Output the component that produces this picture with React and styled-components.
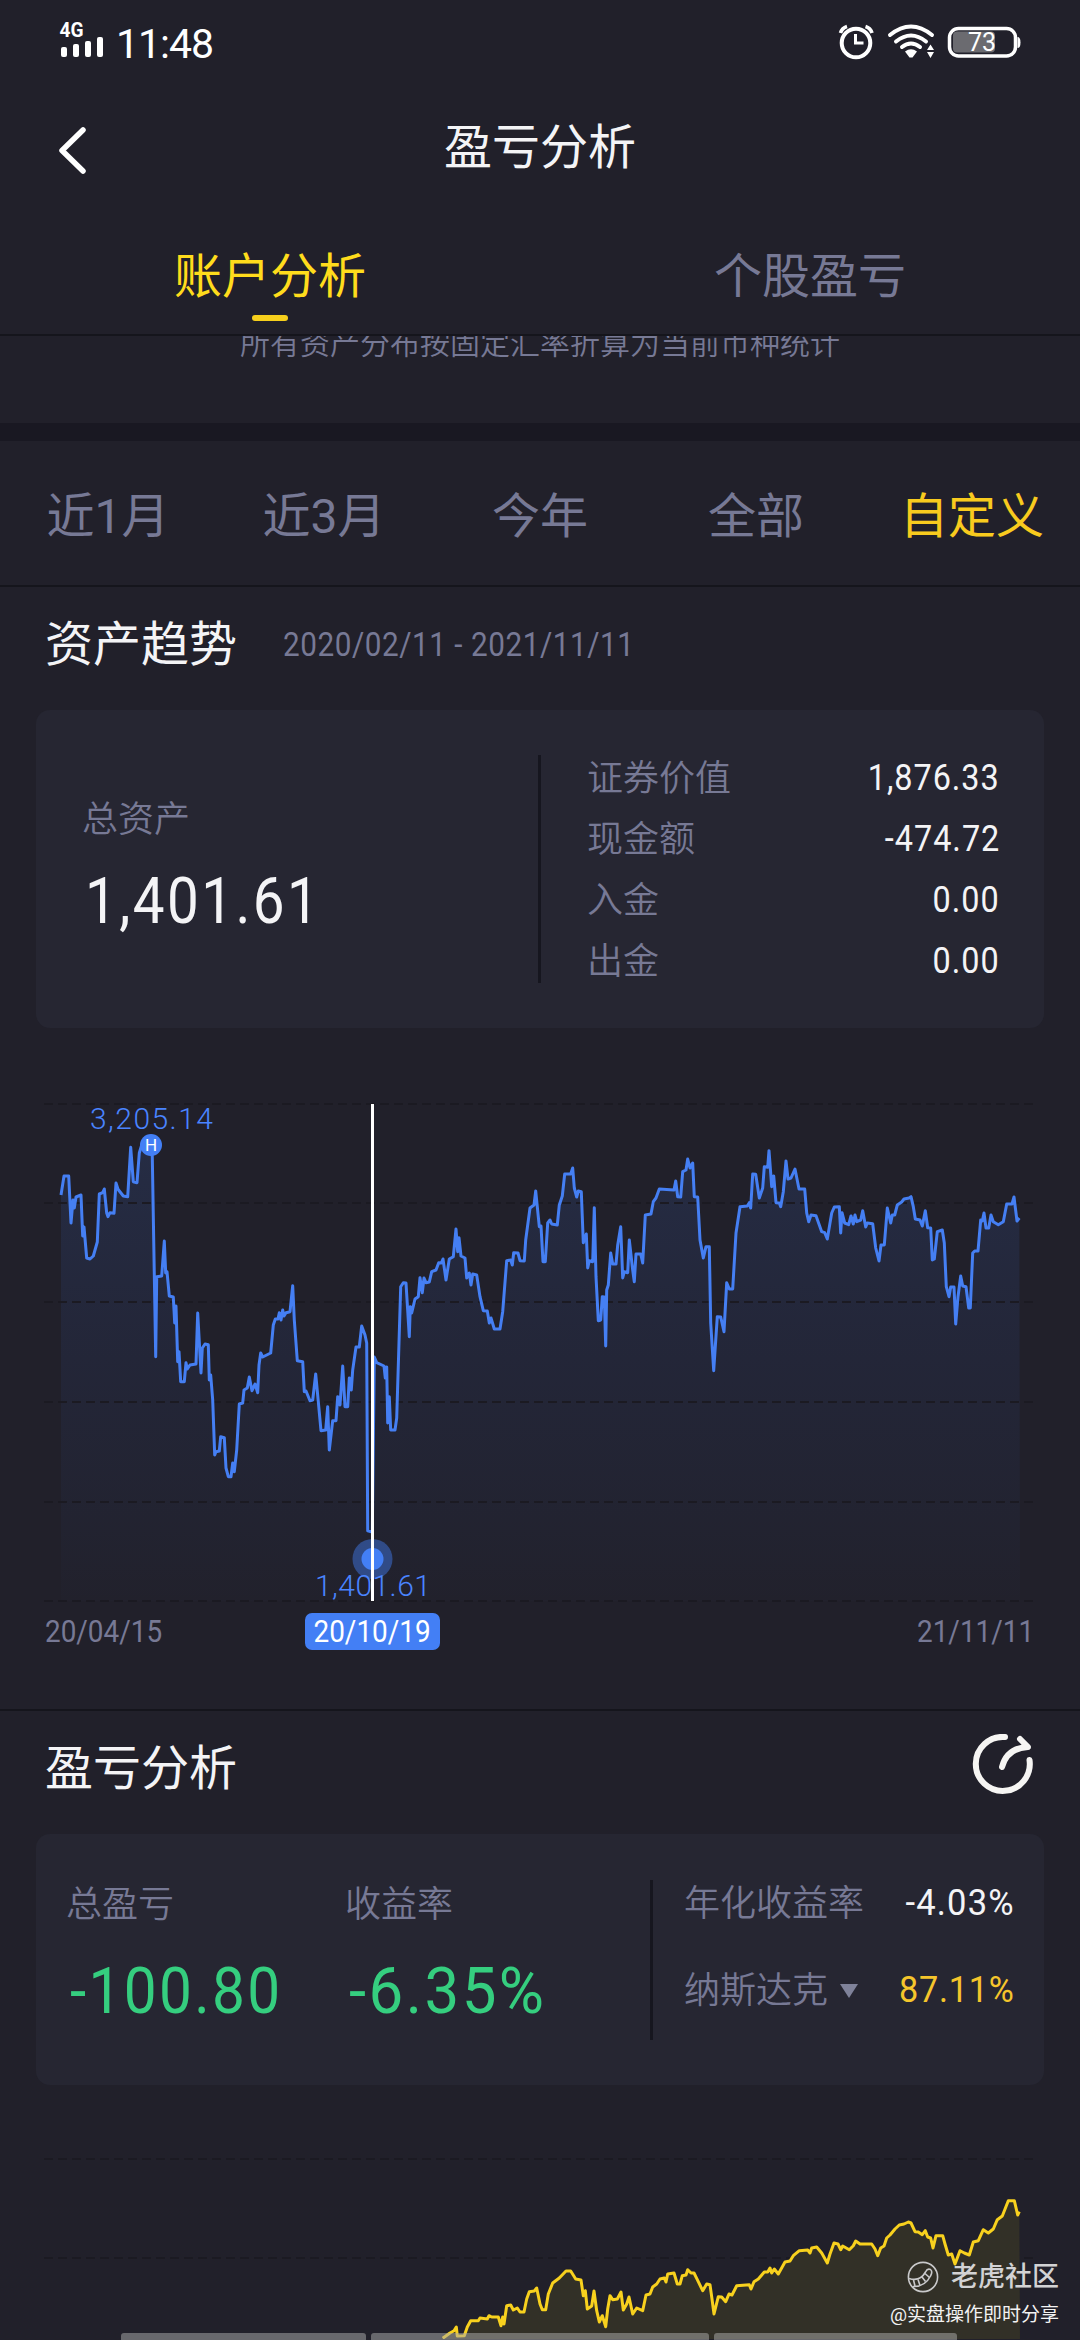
import React, { useState } from "react";
import styled, { createGlobalStyle } from "styled-components";

const GlobalStyle = createGlobalStyle`
  * {
    box-sizing: border-box;
  }

  body {
    margin: 0;
    background: #21202a;
    font-family: Roboto, "Noto Sans CJK SC", sans-serif;
    font-weight: 400;
  }
`;

const Screen = styled.div`
  position: relative;
  width: 1080px;
  height: 2340px;
  overflow: hidden;
  color: #f4f4f6;
`;

const StatusBar = styled.div`
  display: flex;
  justify-content: space-between;
  height: 90px;
  padding: 0 59px;
`;

const StatusGroup = styled.div`
  display: flex;
`;

const Clock = styled.span`
  margin-left: 11px;
  font-size: 41px;
  line-height: 89px;
  letter-spacing: -1px;
  color: #fff;
`;

const NavBar = styled.div`
  display: grid;
  grid-template-columns: 146px 1fr 146px;
  align-items: center;
  height: 116px;
  padding-left: 58px;
  margin-right: 58px;
`;

const NavTitle = styled.h1`
  margin: 0;
  font-size: 48px;
  line-height: 60px;
  font-weight: 400;
  text-align: center;
`;

const Tabs = styled.div`
  display: grid;
  grid-template-columns: 1fr 1fr;
  height: 130px;
  border-bottom: 2px solid #15151c;
`;

const Tab = styled.button`
  display: flex;
  flex-direction: column;
  align-items: center;
  padding: 36px 0 0;
  border: 0;
  background: none;
  font-family: inherit;
  font-size: 48px;
  line-height: 70px;
  color: ${({ $active }) => ($active ? "#ffdc1c" : "#777995")};

  &::after {
    content: "";
    width: 36px;
    height: 6px;
    margin-top: 3px;
    border-radius: 3px;
    background: ${({ $active }) => ($active ? "#f6cf1c" : "transparent")};
  }
`;

const Notice = styled.div`
  height: 87px;
  overflow: hidden;
  font-size: 30px;
  font-weight: 350;
  color: #777995;
  text-align: center;

  p {
    margin: -14px 0 0;
    line-height: 44px;
  }
`;

const Band = styled.div`
  height: 18px;
  background: #191822;
`;

const Periods = styled.div`
  display: grid;
  grid-template-columns: repeat(5, 1fr);
  height: 146px;
  border-bottom: 2px solid #15151c;
`;

const Period = styled.button`
  padding: 0 0 3px;
  border: 0;
  background: none;
  font-family: inherit;
  font-size: 48px;
  white-space: nowrap;
  color: ${({ $active }) => ($active ? "#f8cb1e" : "#777995")};
`;

const SectionHead = styled.div`
  display: flex;
  align-items: center;
  height: ${({ $height }) => $height}px;
  padding: 0 45px 8px 45px;
`;

const SectionTitle = styled.h2`
  margin: 0;
  flex: 1;
  font-size: 48px;
  font-weight: 400;
  line-height: 64px;
`;

const DateRange = styled.div`
  width: 798px;
  padding-left: 46px;
  color: #777995;
`;

// Narrow figures: the text keeps its size and is squeezed sideways
const Figure = styled.span`
  display: inline-block;
  font-size: ${({ $size }) => $size || 36}px;
  line-height: 1.2;
  font-weight: 400;
  letter-spacing: ${({ $track }) => $track || 0}px;
  color: ${({ $color }) => $color || "inherit"};
  white-space: nowrap;
  transform: scaleX(${({ $scale }) => $scale || 0.9});
  transform-origin: ${({ $from }) => $from || "left"} center;
`;

const Card = styled.div`
  display: flex;
  align-items: center;
  height: ${({ $height }) => $height}px;
  margin: 0 36px;
  border-radius: 14px;
  background: #262632;
`;

const Rule = styled.div`
  width: 3px;
  height: ${({ $height }) => $height}px;
  background: #16161f;
`;

const Label = styled.div`
  font-size: 36px;
  font-weight: 350;
  line-height: 54px;
  color: #777995;
  white-space: nowrap;
`;

const Total = styled.div`
  width: 502px;
  padding: 0 0 6px 46px;
`;

const TotalFigure = styled.div`
  margin-top: 15px;
  padding-left: 3px;
`;

const Rows = styled.div`
  flex: 1;
  padding: ${({ $pad }) => $pad};
`;

const Row = styled.div`
  display: flex;
  align-items: center;
  justify-content: space-between;
  height: ${({ $height }) => $height}px;
`;

const Metric = styled.div`
  width: ${({ $width }) => $width}px;
  height: 164px;
`;

const Metrics = styled.div`
  display: flex;
  width: 614px;
  padding-left: 30px;
`;

const MetricFigure = styled.div`
  margin-top: 20px;
  padding-left: 4px;
`;

const Picker = styled.div`
  display: flex;
  align-items: center;
  gap: 12px;
`;

const Triangle = styled.i`
  border: 9px solid transparent;
  border-top: 14px solid #7f829a;
  border-bottom: 0;
`;

const AssetPlot = styled.svg`
  display: block;
  margin: 62px 0 0 40px;
`;

const ProfitPlot = styled.svg`
  display: block;
  margin: 54px 0 0 40px;
`;

const Axis = styled.div`
  display: flex;
  align-items: center;
  height: 101px;
  padding: 0 46px 56px 45px;
  font-size: 31px;
  color: #777995;
  border-bottom: 2px solid #15151c;
`;

const AxisDay = styled.div`
  width: 260px;
  line-height: 37px;
`;

const AxisEnd = styled.div`
  flex: 1;
  text-align: right;
  line-height: 37px;
`;

const Pill = styled.div`
  width: 135px;
  height: 37px;
  border-radius: 7px;
  background: #437ff5;
  color: #fff;
  text-align: center;
  line-height: 37px;
`;

const NavHints = styled.div`
  position: absolute;
  left: 121px;
  bottom: 0;
  display: grid;
  grid-template-columns: 245px 338px 243px;
  gap: 5px;
  height: 7px;
`;

const Hint = styled.div`
  border-radius: 3px 3px 0 0;
  background: rgba(170, 170, 170, 0.52);
`;

const Watermark = styled.div`
  position: absolute;
  right: 21px;
  bottom: 11px;
  color: #d2d2d4;
  text-align: right;
`;

const WatermarkBrand = styled.div`
  display: flex;
  align-items: center;
  justify-content: flex-end;
  gap: 12px;
  height: 38px;
  font-size: 27px;
  font-weight: 500;
  line-height: 38px;
`;

const WatermarkUser = styled.div`
  margin-top: 5px;
  font-size: 19px;
  line-height: 28px;
  color: #f2f2f2;
`;

const ASSET_LINE =
  "21,105 24,86 28.7,86 31,133 33,110 34.3,118 36,107 41,105 42.7,146 44,137 46.7,168 50,169 53.3,166 57.3,152 59.3,104 62.7,102.7 64.3,99 66.7,123 68,126.7 70,122.7 74,123.3 76,93 78,99.3 83.3,106 87.7,106.7 90.7,57.3 93.3,91.7 97,92.7 99.3,63 101.7,55 111,55 112.3,67 115.7,266.7 116.7,186.7 121.7,186 124.3,151 125.7,183 127,181.7 129.3,206 133.3,207 134.7,233 136,216 137.7,271.7 139,261.7 140.7,291.7 144.3,291.7 146,272.7 147.3,279 150,275 156,274 157.7,223 161,283 162.3,258 165,254 168.3,254.7 169.3,290 170.7,285 172.7,310 174.7,365 176,361.7 179.3,361 180.7,346.7 184.3,347.7 186,378 188.3,386.7 191,386.7 192.7,373 194.3,381.7 196.7,360 199.3,314 202.7,313 204,300 207.3,298 209.3,287 212,300.7 215,294 217.7,302.7 219,275 220.7,263 222.7,267 230.7,263 233.3,235 235.3,229 238,229 239.3,222.7 241,230 242.7,220 244,226 246,222.7 250,221.7 252.7,195.7 254.3,230 257.3,270.7 262.7,271.7 264.3,301.7 266,301 270,310.7 272.7,310 275.7,284 278.3,311.7 281,340.7 285.7,340 287.7,316.7 289.3,360 292.7,330.7 296,330.7 297.7,306.7 300,315 302.7,276 305,316.7 307.7,316.7 309.3,288 311.3,300 312.7,280 316,257 319.3,257 321.7,236 325,245 326.7,253 327.7,440.7 332.3,442 334.3,267 336.7,272.7 344,276 345.3,288 346.7,277 347.7,333 349.3,306.7 350.7,340 355,340 356.7,328 360.7,196.7 363.3,192.7 366,193 369.3,246.7 370.3,216.7 371.7,223 375,209 378.3,206.7 380,187.7 382.3,202.7 384,188 386,192.7 389.3,192 391.7,181.7 396,180 398.7,172.7 401.3,173 403,169 406,190 409.3,169 413.3,166.7 416,139 417.7,161.7 419,147.7 421,166 425,168 426.7,188 429.3,183 431,195 432.7,184 436.7,185 440,206.7 443.3,220.7 447.3,221 449.3,233 451,228 454.3,239 460,239 462.7,221.7 466.7,170.7 470.7,170 472.3,175 473.7,162.7 478,163 480,170.7 484.3,171 485.7,150 490,118 494,115 495.7,101 499.3,136.7 501,136 503,171.7 505.3,171.7 507.7,133 510,130 511.7,134 517.3,135 519.3,115 522.3,106 524.7,84 530.7,84 532.7,78 534.3,98 536.7,107 538.3,101 541.3,101.7 543.3,152.7 546.3,144 547.7,178 549.3,170.7 552.7,171.7 554.3,117.7 556,186.7 558.3,230.7 560.7,230 562.3,206.7 564.3,207 565.7,256 566.7,200 568.3,195 570.7,163 572.7,174 576,174 577.7,155 580.7,136.7 582.7,188 584.3,181.7 587.7,182.7 589.3,150 592.7,180 594.3,191.7 596,164 600.7,164 602.7,173 605.3,125 611,124 613.3,111.7 616,108 619.3,99 634,100 635.7,91 637.7,106.7 640.7,107 642.7,81.7 646,80 647.7,69 650,78 652.7,73 654.3,106.7 657.7,107 660,150 663.3,168 666,156.7 669.3,156.7 670.7,233 673.7,280.7 677.3,226.7 680.7,227 684,241.7 686.7,192.7 689.3,199 692.7,199 696,143 700,116.7 707.3,116 709.3,112.7 710.7,118 712.7,84 715.7,84.3 719.3,108 722.7,98 724.3,76.7 727.7,77.3 729,60.7 731.7,96.7 733.7,86 736,112.7 739.3,113 740.7,116.7 743.3,101.7 746,71 748,89 751,88 755,79 759,99 764.7,99 766.7,123 768.7,131.7 771,125 776,125.7 779.3,135 781.7,141.7 784.7,142.7 787.3,149 791.7,123 794.3,117 799.3,116.7 800.7,143 802,122.7 804.7,133 808.7,134.7 811,126 813.3,134 815,125 816.7,131.7 820.7,130 822.7,120.7 825.7,137 827.3,133 832.7,133.7 835.7,158 839,171 841,155 844.3,155 847.3,118 850.7,133 852.3,125 854.7,125 857.3,115 861.7,112 864,109 869,108 871,106.7 873.3,116.7 875.3,129 880,130 882.3,136 885.3,120.7 887.7,137.7 890.7,138 892.3,170 894.3,169 897.3,141.7 902.3,140 904.3,153 906.3,196.7 909,206.7 910.7,197 914,197 915.7,234 918,206.7 920.7,186 922.7,196 926,196.7 928.7,218 930.3,218 932.7,163 934.7,161 938,161 940.7,130 942.3,131 944,123 946,138 948.7,138 951,125 953.3,131.7 958.3,134.7 963.3,131.7 966.7,114 972,114 974,107 977,131 979.3,128";

const PROFIT_LINE =
  "402.7,199.3 410,194 414,191.7 416.3,188 417.3,197 424.3,196.7 427.3,188 430.7,181.7 438.3,181.7 440,179 447.3,180 449,176.7 451.7,178 458.3,178 461,186.7 462.7,178 464,185 466.7,166.7 470.7,166 473.3,171 477.3,169 480,173 484,173 486.7,160 489.3,152.7 494.3,152 496.7,149 500,165 502.3,170.7 505.7,170.7 508.3,155 512.7,144 519.3,139 526,132 530.7,132 535.7,140 541,141 543.3,156.7 545.3,151.7 547.3,170 551.7,167 554,152 556.7,171.7 559.3,183 562.3,176.7 565.7,187.7 567.7,170 570,156.7 572.7,160.7 577.3,160 581,153 583.3,171 586.7,165 589,158 592.7,175 596.7,169 602.7,171.7 606,156 610,155 612.7,148 616.7,145 620,140 624.3,139 626,143 627.7,135 634,134 637.3,145 640,145 642.3,136.7 646,136 647.7,130.7 651,134 654,134 657.3,140.7 662.7,151.7 666.7,145 670,145.7 672,160 674,175 678.3,157.7 681.7,158 685.7,162.7 689,155 692,156 696.7,146.7 709.3,145.7 711,150 714,142.7 718.3,140 724.3,133 727.7,133 730,129 731.7,134 734.3,130 738.3,135 745,123 750,122 753.3,116.7 759.3,111.7 767.7,111 770,114 771.7,109 776.7,108 781.7,114 787.3,124 790,115 794,104 798,105 800.7,110.7 802.7,107 809.3,110.7 813.3,106.7 815.7,102 820,105 831.7,105 835,110 837.7,116.7 840.7,109 844,107 846.7,99 850,96 855,90 859.3,86 864,85 868.3,83 871,84 875,92.7 878.3,93 882.3,95.7 885.3,91.7 887.7,98 890.7,99 893,109 896,96.7 902.7,96.7 905,105 908.3,116 911.7,115 915,125 920,111.7 924.3,114 929.3,116 933.3,103 938.3,101.7 943.3,90.7 948.3,94 953.3,90 957.3,80.7 962.3,77 968.3,61.7 974.3,61.7 977.7,76 979.3,72.7";

const GridLines = ({ ys }) =>
  ys.map(y => (
    <line
      key={y}
      x1="4"
      x2="995"
      y1={y}
      y2={y}
      stroke="#1b1a22"
      strokeWidth="2"
      strokeDasharray="9 5"
    />
  ));

const AssetChart = () => (
  <AssetPlot width="1000" height="520" viewBox="0 0 1000 520">
    <defs>
      <linearGradient id="assetFill" x1="0" y1="0" x2="0" y2="1">
        <stop offset="0" stopColor="#437ff5" stopOpacity="0.13" />
        <stop offset="0.5" stopColor="#3a66d0" stopOpacity="0.08" />
        <stop offset="1" stopColor="#437ff5" stopOpacity="0.01" />
      </linearGradient>
    </defs>
    <polygon points={`21,511 ${ASSET_LINE} 980,511`} fill="url(#assetFill)" />
    <GridLines ys={[14, 113, 212, 312, 412, 511]} />
    <polyline
      points={ASSET_LINE}
      fill="none"
      stroke="#457ff3"
      strokeWidth="3"
      strokeLinejoin="round"
    />
    <circle cx="111" cy="55" r="11" fill="#437ff5" />
    <text x="111" y="61" fontSize="17" fill="#fff" textAnchor="middle">
      H
    </text>
    <text x="50" y="39" fontSize="30" fontWeight="300" fill="#4a84ff" textLength="123">
      3,205.14
    </text>
    <circle cx="332.5" cy="469" r="20" fill="#437ff5" fillOpacity="0.45" />
    <circle cx="332.5" cy="469" r="11" fill="#437ff5" />
    <text x="275" y="506" fontSize="30" fontWeight="300" fill="#4a84ff" textLength="116">
      1,401.61
    </text>
    <rect x="331" y="14" width="3" height="497" fill="#fff" />
  </AssetPlot>
);

const ProfitChart = () => (
  <ProfitPlot width="1000" height="200" viewBox="0 0 1000 200">
    <GridLines ys={[20, 119]} />
    <polygon points={`402,200 ${PROFIT_LINE} 980,200`} fill="#323027" />
    <polyline
      points={PROFIT_LINE}
      fill="none"
      stroke="#f8d11e"
      strokeWidth="3"
      strokeLinejoin="round"
    />
  </ProfitPlot>
);

const SignalIcon = () => (
  <svg width="46" height="90" viewBox="59 0 46 90" fill="#fff">
    <text
      x="59.5"
      y="36.5"
      fontSize="20"
      fontWeight="700"
      textLength="24"
      lengthAdjust="spacingAndGlyphs"
    >
      4G
    </text>
    <rect x="61" y="47" width="6" height="10" rx="2" />
    <rect x="73" y="44" width="6" height="13" rx="2" />
    <rect x="85" y="41" width="6" height="16" rx="2" />
    <rect x="97" y="37" width="6" height="20" rx="2" />
  </svg>
);

const StatusIcons = () => (
  <svg width="184" height="90" viewBox="837 0 184 90" fill="none" stroke="#fff">
    <circle cx="856" cy="43" r="14.3" strokeWidth="4" />
    <path d="M855.5 34v9h8" strokeWidth="3" />
    <path d="M840.5 33q1.500-5 6.500-6.500M865.500 26.500q5 1.500 6.500 6.500" strokeWidth="3.600" />
    <path
      d="M890 35q21-17 42 0M896 41.500q15-12 30 0M902 47q9-7 18 0"
      strokeWidth="4"
      strokeLinecap="round"
    />
    <path d="M905 51.500q6-4.500 12 0l-4.500 6h-3z" fill="#fff" stroke="none" />
    <path d="M927 50l3.500-5.500 3.500 5.500zM927 52l3.500 6 3.500-6z" fill="#fff" stroke="none" />
    <rect x="953" y="31.500" width="42" height="21" rx="4" fill="#6b6b70" stroke="none" />
    <rect x="949.500" y="28.500" width="66" height="27.500" rx="9" strokeWidth="3.500" />
    <path d="M1017.500 37q3 0 3 5.500t-3 5.500z" fill="#fff" stroke="none" />
    <text x="982" y="51" fontSize="25" fill="#fff" stroke="none" textAnchor="middle">
      73
    </text>
  </svg>
);

const BackIcon = () => (
  <svg width="30" height="54" viewBox="0 0 30 54">
    <path
      d="M25 9L4 29.500 25 50"
      fill="none"
      stroke="#fff"
      strokeWidth="5.500"
      strokeLinecap="round"
      strokeLinejoin="round"
    />
  </svg>
);

const ShareIcon = () => (
  <svg
    width="64"
    height="70"
    viewBox="0 5 64 70"
    fill="none"
    stroke="#f6f5f3"
    strokeWidth="6"
    strokeLinecap="round"
    strokeLinejoin="round"
  >
    <path d="M34 8A27 27 0 1 0 58.500 31" />
    <path d="M31 38Q36 19 57 18L49 10" />
  </svg>
);

const TigerIcon = () => (
  <svg width="32" height="32" viewBox="0 0 32 32" fill="none" stroke="#c9c9cb" strokeWidth="1.600">
    <circle cx="16" cy="16" r="14.600" />
    <path d="M2 17.500Q13 21 18.500 11Q20.500 7 23.500 8.500Q26 10.500 23.500 15Q18 26 6 25.500" />
    <path d="M6.500 19l1.500 6M11 18.500l2 6M15 16l3.500 4.500M18 12.500l4.500 4" />
  </svg>
);

const TABS = ["账户分析", "个股盈亏"];
const PERIODS = ["近1月", "近3月", "今年", "全部", "自定义"];
const ASSETS = [
  ["证券价值", "1,876.33"],
  ["现金额", "-474.72"],
  ["入金", "0.00"],
  ["出金", "0.00"]
];

const App = () => {
  const [tab, setTab] = useState(0);
  const [period, setPeriod] = useState(4);

  return (
    <Screen>
      <GlobalStyle />
      <StatusBar>
        <StatusGroup>
          <SignalIcon />
          <Clock>11:48</Clock>
        </StatusGroup>
        <StatusIcons />
      </StatusBar>
      <NavBar>
        <BackIcon />
        <NavTitle>盈亏分析</NavTitle>
      </NavBar>
      <Tabs>
        {TABS.map((name, i) => (
          <Tab key={name} $active={i === tab} onClick={() => setTab(i)}>
            {name}
          </Tab>
        ))}
      </Tabs>
      <Notice>
        <p>所有资产分布按固定汇率折算为当前币种统计</p>
      </Notice>
      <Band />
      <Periods>
        {PERIODS.map((name, i) => (
          <Period key={name} $active={i === period} onClick={() => setPeriod(i)}>
            {name}
          </Period>
        ))}
      </Periods>

      <SectionHead $height={123}>
        <SectionTitle>资产趋势</SectionTitle>
        <DateRange>
          <Figure $size={33} $track={0.6}>
            2020/02/11 - 2021/11/11
          </Figure>
        </DateRange>
      </SectionHead>
      <Card $height={318}>
        <Total>
          <Label>总资产</Label>
          <TotalFigure>
            <Figure $size={65} $scale={0.87} $track={2.8}>
              1,401.61
            </Figure>
          </TotalFigure>
        </Total>
        <Rule $height={228} />
        <Rows $pad="3px 44px 0 46px">
          {ASSETS.map(([name, value]) => (
            <Row key={name} $height={61}>
              <Label>{name}</Label>
              <Figure $from="right" $track={1.1}>
                {value}
              </Figure>
            </Row>
          ))}
        </Rows>
      </Card>
      <AssetChart />
      <Axis>
        <AxisDay>
          <Figure $size={31}>20/04/15</Figure>
        </AxisDay>
        <Pill>
          <Figure $size={31} $from="center">
            20/10/19
          </Figure>
        </Pill>
        <AxisEnd>
          <Figure $size={31} $from="right">
            21/11/11
          </Figure>
        </AxisEnd>
      </Axis>

      <SectionHead $height={123}>
        <SectionTitle>盈亏分析</SectionTitle>
        <ShareIcon />
      </SectionHead>
      <Card $height={251}>
        <Metrics>
          <Metric $width={279}>
            <Label>总盈亏</Label>
            <MetricFigure>
              <Figure $size={65} $track={2.6} $color="#35ce7f">
                -100.80
              </Figure>
            </MetricFigure>
          </Metric>
          <Metric $width={300}>
            <Label>收益率</Label>
            <MetricFigure>
              <Figure $size={65} $scale={0.95} $track={2.6} $color="#35ce7f">
                -6.35%
              </Figure>
            </MetricFigure>
          </Metric>
        </Metrics>
        <Rule $height={160} />
        <Rows $pad="0 29px 24px 31px">
          <Row $height={87}>
            <Label>年化收益率</Label>
            <Figure $from="right" $scale={0.96} $track={1.2}>
              -4.03%
            </Figure>
          </Row>
          <Row $height={87}>
            <Picker>
              <Label>纳斯达克</Label>
              <Triangle />
            </Picker>
            <Figure $from="right" $scale={0.95} $track={0.8} $color="#f5c52c">
              87.11%
            </Figure>
          </Row>
        </Rows>
      </Card>
      <ProfitChart />

      <NavHints>
        <Hint />
        <Hint />
        <Hint />
      </NavHints>
      <Watermark>
        <WatermarkBrand>
          <TigerIcon />
          老虎社区
        </WatermarkBrand>
        <WatermarkUser>@实盘操作即时分享</WatermarkUser>
      </Watermark>
    </Screen>
  );
};

export default App;
